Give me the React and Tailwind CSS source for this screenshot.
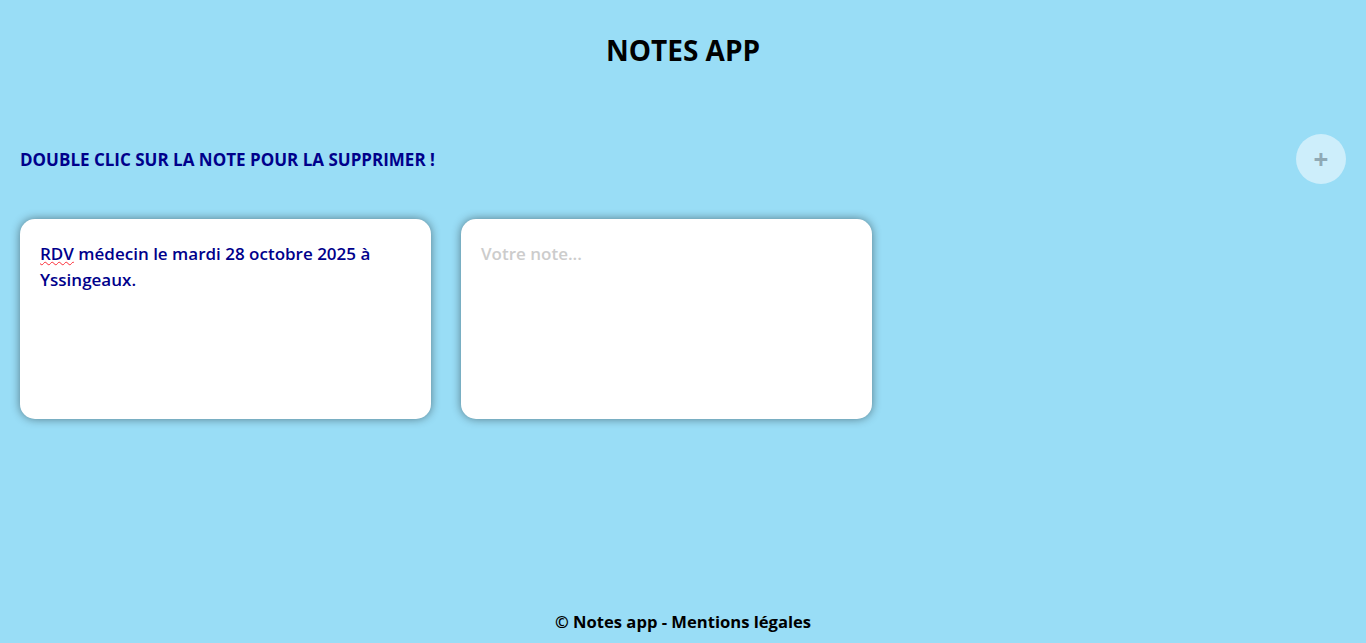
export default function App() {
  const font = { fontFamily: '"Open Sans", "Noto Sans", sans-serif' };
  return (
    <div className="min-h-[643px] bg-[#99ddf6] flex flex-col" style={font}>
      <h1 className="text-center text-[28px] font-bold text-black mt-[26px] leading-[48px]">NOTES APP</h1>
      <div className="flex items-center justify-between px-5 mt-[60px]">
        <h2 className="text-[17px] font-bold text-[#00008b] pt-[2px]">DOUBLE CLIC SUR LA NOTE POUR LA SUPPRIMER !</h2>
        <button className="w-[50px] h-[50px] rounded-full bg-[#cdeefb] text-[#8fa9b5] text-[26px] font-bold flex items-center justify-center leading-none">+</button>
      </div>
      <div className="flex gap-[30px] px-5 mt-[35px]">
        <div className="w-[411px] h-[200px] bg-white rounded-[15px] shadow-[0_0_10px_rgba(0,0,0,0.45)] px-5 pt-[22px] pb-5 text-[17px] font-semibold leading-[26px] text-[#00008b]">
          <span className="underline decoration-wavy decoration-red-500 decoration-1">RDV</span> médecin le mardi 28 octobre 2025 à Yssingeaux.
        </div>
        <textarea
          placeholder="Votre note..."
          className="w-[411px] h-[200px] bg-white rounded-[15px] shadow-[0_0_10px_rgba(0,0,0,0.45)] px-5 pt-[22px] pb-5 text-[17px] font-semibold leading-[26px] text-[#00008b] placeholder:text-[#cccccc] resize-none outline-none"
          style={font}
        />
      </div>
      <div className="flex-1" />
      <footer className="text-center text-[16.6px] font-bold text-black pb-[8px] leading-[26px]">© Notes app - Mentions légales</footer>
    </div>
  );
}
